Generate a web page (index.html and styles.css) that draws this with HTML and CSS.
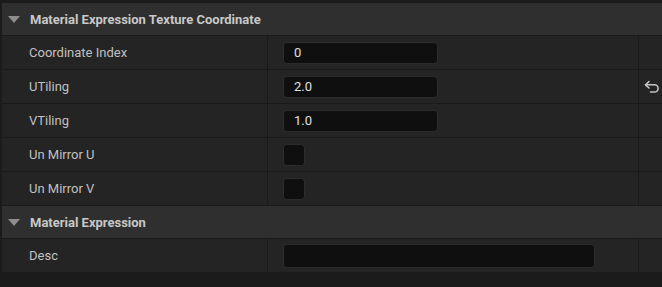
FILE: index.html
```html
<!DOCTYPE html>
<html>
<head>
<meta charset="utf-8">
<link rel="stylesheet" href="styles.css">
</head>
<body>
<div class="panel">
  <div class="category">
    <span class="caret"></span>
    <span class="cat-title">Material Expression Texture Coordinate</span>
  </div>
  <div class="row">
    <div class="label">Coordinate Index</div>
    <div class="value"><div class="field">0</div></div>
    <div class="reset"></div>
  </div>
  <div class="row">
    <div class="label">UTiling</div>
    <div class="value"><div class="field">2.0</div></div>
    <div class="reset">
      <svg width="16" height="14" viewBox="0 0 16 14" fill="none" stroke="#c4c4c4" stroke-width="1.6" stroke-linecap="round" stroke-linejoin="round">
        <path d="M5 1.5 L1.5 4.8 L5 8"/>
        <path d="M1.8 4.8 H10.5 A3.6 3.6 0 0 1 10.5 12 H6.5"/>
      </svg>
    </div>
  </div>
  <div class="row">
    <div class="label">VTiling</div>
    <div class="value"><div class="field">1.0</div></div>
    <div class="reset"></div>
  </div>
  <div class="row">
    <div class="label">Un Mirror U</div>
    <div class="value"><div class="check"></div></div>
    <div class="reset"></div>
  </div>
  <div class="row">
    <div class="label">Un Mirror V</div>
    <div class="value"><div class="check"></div></div>
    <div class="reset"></div>
  </div>
  <div class="category">
    <span class="caret"></span>
    <span class="cat-title">Material Expression</span>
  </div>
  <div class="row last">
    <div class="label">Desc</div>
    <div class="value"><div class="field wide"></div></div>
    <div class="reset"></div>
  </div>
</div>
</body>
</html>
```
FILE: styles.css
```css
html, body {
  margin: 0;
  padding: 0;
  background: #1b1b1b;
  font-family: Roboto, "Liberation Sans", sans-serif;
}
.panel {
  padding: 3px 0 0 2px;
  display: flex;
  flex-direction: column;
}
.category {
  height: 32px;
  background: #2f2f2f;
  border-bottom: 1px solid #1a1a1a;
  display: flex;
  align-items: center;
}
.caret {
  width: 0;
  height: 0;
  margin-left: 6px;
  margin-right: 10px;
  border-left: 6px solid transparent;
  border-right: 6px solid transparent;
  border-top: 7px solid #8e8e8e;
}
.cat-title {
  font-size: 13px;
  font-weight: bold;
  color: #c8c8c8;
}
.row {
  height: 33px;
  background: #1a1a1a;
  border-bottom: 1px solid #1a1a1a;
  display: grid;
  grid-template-columns: 265px 370px 23px;
  column-gap: 1px;
}
.row.last {
  border-bottom: none;
}
.row > div {
  display: flex;
  align-items: center;
  background: #242424;
}
.label {
  padding-left: 27px;
  font-size: 13px;
  color: #c0c0c0;
}
.value {
  padding-left: 15px;
}
.field {
  box-sizing: border-box;
  width: 155px;
  height: 22px;
  background: #0f0f0f;
  border: 1px solid #2c2c2c;
  border-radius: 4px;
  padding-left: 10px;
  display: flex;
  align-items: center;
  font-size: 13px;
  color: #e0e0e0;
}
.field.wide {
  width: 312px;
  height: 24px;
}
.check {
  box-sizing: border-box;
  width: 22px;
  height: 22px;
  background: #0f0f0f;
  border: 1px solid #2c2c2c;
  border-radius: 4px;
}
.reset {
  justify-content: center;
}
.reset svg {
  margin-left: 2px;
}
```
